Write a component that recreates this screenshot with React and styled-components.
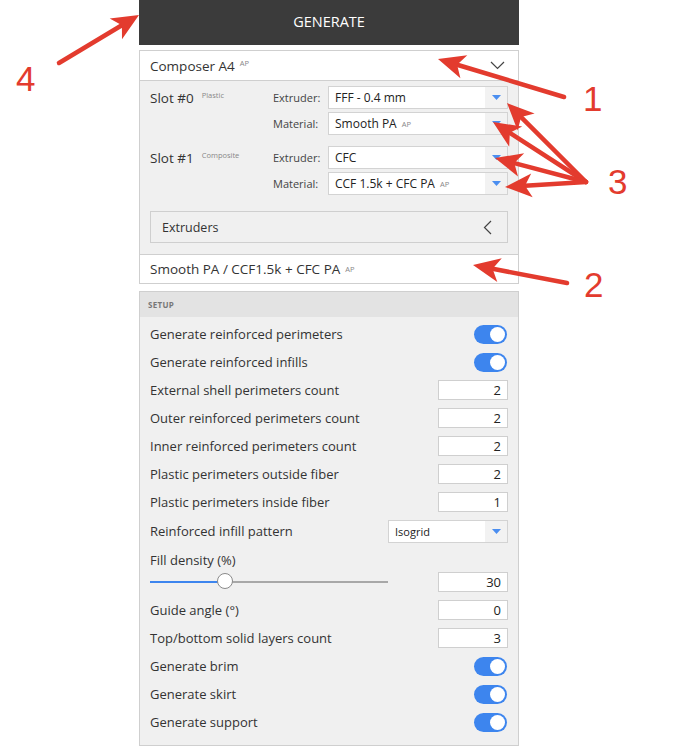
import React from "react";
import styled, { createGlobalStyle } from "styled-components";

const GlobalStyle = createGlobalStyle`
  html, body {
    margin: 0;
    padding: 0;
    background: #fff;
  }
  body {
    font-family: "Open Sans", "Noto Sans", sans-serif;
    color: #333;
  }
`;

const BLUE = "#3d85ee";
const RED = "#e33b2e";

// data
const slots = [
  {
    title: "Slot #0",
    kind: "Plastic",
    fields: [
      { label: "Extruder:", value: "FFF - 0.4 mm" },
      { label: "Material:", value: "Smooth PA", ap: true },
    ],
  },
  {
    title: "Slot #1",
    kind: "Composite",
    fields: [
      { label: "Extruder:", value: "CFC" },
      { label: "Material:", value: "CCF 1.5k + CFC PA", ap: true },
    ],
  },
];

const topRows = [
  { label: "Generate reinforced perimeters", type: "toggle" },
  { label: "Generate reinforced infills", type: "toggle" },
  { label: "External shell perimeters count", type: "number", value: 2 },
  { label: "Outer reinforced perimeters count", type: "number", value: 2 },
  { label: "Inner reinforced perimeters count", type: "number", value: 2 },
  { label: "Plastic perimeters outside fiber", type: "number", value: 2 },
  { label: "Plastic perimeters inside fiber", type: "number", value: 1 },
];

const bottomRows = [
  { label: "Guide angle (°)", type: "number", value: 0 },
  { label: "Top/bottom solid layers count", type: "number", value: 3 },
  { label: "Generate brim", type: "toggle" },
  { label: "Generate skirt", type: "toggle" },
  { label: "Generate support", type: "toggle" },
];

const arrows = [
  { from: [59, 63], to: [139, 15] },
  { from: [564, 97], to: [438, 59] },
  { from: [567, 283], to: [473, 265] },
  { from: [586, 182], to: [507, 103] },
  { from: [586, 182], to: [493, 122] },
  { from: [586, 182], to: [495, 158] },
  { from: [586, 182], to: [505, 187] },
];

const numbers = [
  { n: "4", x: 16, y: 91 },
  { n: "1", x: 583, y: 111 },
  { n: "2", x: 584, y: 297 },
  { n: "3", x: 608, y: 194 },
];

function App() {
  return (
    <Page>
      <GlobalStyle />
      <Sidebar>
        <GenerateButton>GENERATE</GenerateButton>

        <Card>
          <CardHeader>
            <span>
              Composer A4<Ap>AP</Ap>
            </span>
            <Chevron dir="down" />
          </CardHeader>

          <SlotsArea>
            {slots.map((slot) => (
              <SlotGroup key={slot.title}>
                <SlotTitle>
                  {slot.title}
                  <SlotKind>{slot.kind}</SlotKind>
                </SlotTitle>
                <Fields>
                  {slot.fields.map((f) => (
                    <FieldRow key={f.label}>
                      <FieldLabel>{f.label}</FieldLabel>
                      <Select height={23}>
                        <SelectText>
                          {f.value}
                          {f.ap && <Ap>AP</Ap>}
                        </SelectText>
                        <SelectArrow />
                      </Select>
                    </FieldRow>
                  ))}
                </Fields>
              </SlotGroup>
            ))}

            <Collapsible>
              <span>Extruders</span>
              <Chevron dir="left" />
            </Collapsible>
          </SlotsArea>

          <MaterialRow>
            Smooth PA / CCF1.5k + CFC PA<Ap>AP</Ap>
          </MaterialRow>
        </Card>

        <SetupPanel>
          <SectionHeader>SETUP</SectionHeader>
          <Rows>
            {topRows.map((r) => (
              <SettingRow key={r.label} {...r} />
            ))}

            <Row tall>
              <RowLabel>Reinforced infill pattern</RowLabel>
              <Select height={23} width={120}>
                <SelectText small>Isogrid</SelectText>
                <SelectArrow />
              </Select>
            </Row>

            <FillBlock>
              <RowLabel>Fill density (%)</RowLabel>
              <SliderRow>
                <Slider value={30} />
                <NumberBox>30</NumberBox>
              </SliderRow>
            </FillBlock>

            {bottomRows.map((r) => (
              <SettingRow key={r.label} {...r} />
            ))}
          </Rows>
        </SetupPanel>
      </Sidebar>

      <Annotations />
    </Page>
  );
}

function SettingRow({ label, type, value }) {
  return (
    <Row>
      <RowLabel>{label}</RowLabel>
      {type === "toggle" ? <Toggle /> : <NumberBox>{value}</NumberBox>}
    </Row>
  );
}

function Slider({ value }) {
  return (
    <Track>
      <TrackFill style={{ width: `${value}%` }} />
      <Knob style={{ left: `calc(${value}% - 4px)` }} />
    </Track>
  );
}

function Toggle() {
  return (
    <ToggleTrack>
      <ToggleKnob />
    </ToggleTrack>
  );
}

function SelectArrow() {
  return (
    <ArrowBox>
      <svg width="9" height="5" viewBox="0 0 9 5">
        <polygon points="0,0 9,0 4.5,5" fill="#4b8ef0" />
      </svg>
    </ArrowBox>
  );
}

function Chevron({ dir }) {
  if (dir === "down") {
    return (
      <svg width="15" height="9" viewBox="0 0 15 9">
        <polyline points="1,1 7.5,7.5 14,1" fill="none" stroke="#444" strokeWidth="1.2" />
      </svg>
    );
  }
  return (
    <svg width="9" height="15" viewBox="0 0 9 15">
      <polyline points="8,1 1.5,7.5 8,14" fill="none" stroke="#444" strokeWidth="1.2" />
    </svg>
  );
}

function arrowHead([x1, y1], [x2, y2]) {
  const dx = x2 - x1;
  const dy = y2 - y1;
  const len = Math.hypot(dx, dy);
  const ux = dx / len;
  const uy = dy / len;
  const px = -uy;
  const py = ux;
  const L = 27;
  const W = 12;
  const notch = 20;
  const bx = x2 - ux * L;
  const by = y2 - uy * L;
  const nx = x2 - ux * notch;
  const ny = y2 - uy * notch;
  const pts = [
    [x2, y2],
    [bx + px * W, by + py * W],
    [nx, ny],
    [bx - px * W, by - py * W],
  ];
  return {
    line: [x1, y1, nx, ny],
    head: pts.map((p) => p.map((v) => v.toFixed(1)).join(",")).join(" "),
  };
}

function Annotations() {
  return (
    <Overlay width="681" height="748" viewBox="0 0 681 748">
      {arrows.map((a, i) => {
        const { line, head } = arrowHead(a.from, a.to);
        return (
          <g key={i}>
            <line
              x1={line[0]}
              y1={line[1]}
              x2={line[2]}
              y2={line[3]}
              stroke={RED}
              strokeWidth="4.5"
              strokeLinecap="round"
            />
            <polygon points={head} fill={RED} />
          </g>
        );
      })}
      {numbers.map((n) => (
        <text
          key={n.n}
          x={n.x}
          y={n.y}
          fill={RED}
          fontSize="35"
          fontFamily="'Liberation Sans', Arial, sans-serif"
        >
          {n.n}
        </text>
      ))}
    </Overlay>
  );
}

const Page = styled.div`
  position: relative;
  width: 681px;
  height: 748px;
  overflow: hidden;
  background: #fff;
`;

const Sidebar = styled.div`
  margin-left: 139px;
  width: 380px;
  display: flex;
  flex-direction: column;
`;

const GenerateButton = styled.div`
  height: 45px;
  background: #3b3b3b;
  color: #fff;
  font-size: 14.5px;
  display: flex;
  align-items: center;
  justify-content: center;
  padding-bottom: 3px;
  box-sizing: border-box;
`;

const Card = styled.div`
  margin-top: 5px;
  border: 1px solid #cfcfcf;
  background: #fff;
`;

const CardHeader = styled.div`
  height: 29px;
  padding: 0 13px 0 10px;
  display: flex;
  align-items: center;
  justify-content: space-between;
  font-size: 13.5px;
  color: #333;
`;

const Ap = styled.sup`
  font-size: 7.5px;
  color: #888;
  margin-left: 5px;
  vertical-align: 5px;
  line-height: 0;
`;

const SlotsArea = styled.div`
  background: #f0f0f0;
  border-top: 1px solid #cfcfcf;
  padding: 5px 10px 11px 10px;
  display: flex;
  flex-direction: column;
  gap: 11px;
`;

const SlotGroup = styled.div`
  display: flex;
  align-items: flex-start;
`;

const SlotTitle = styled.div`
  width: 123px;
  height: 23px;
  display: flex;
  align-items: center;
  font-size: 13.5px;
  color: #333;
`;

const SlotKind = styled.span`
  font-size: 7.5px;
  color: #888;
  margin-left: 8px;
  align-self: flex-start;
  margin-top: 4px;
`;

const Fields = styled.div`
  flex: 1;
  display: flex;
  flex-direction: column;
  gap: 3px;
`;

const FieldRow = styled.div`
  display: flex;
  align-items: center;
`;

const FieldLabel = styled.div`
  width: 55px;
  font-size: 11px;
  color: #444;
`;

const Select = styled.div`
  flex: ${(p) => (p.width ? "none" : 1)};
  width: ${(p) => (p.width ? `${p.width}px` : "auto")};
  height: ${(p) => p.height}px;
  box-sizing: border-box;
  border: 1px solid #d3d3d3;
  background: #fff;
  display: flex;
  align-items: stretch;
`;

const SelectText = styled.div`
  flex: 1;
  display: flex;
  align-items: center;
  padding-left: 6px;
  font-size: ${(p) => (p.small ? "11px" : "12px")};
  color: #222;
  white-space: nowrap;
`;

const ArrowBox = styled.div`
  width: 22px;
  background: #f2f2f2;
  display: flex;
  align-items: center;
  justify-content: center;
`;

const Collapsible = styled.div`
  margin-top: 5px;
  height: 32px;
  box-sizing: border-box;
  border: 1px solid #cfcfcf;
  background: #f0f0f0;
  display: flex;
  align-items: center;
  justify-content: space-between;
  padding: 0 15px 0 11px;
  font-size: 12.5px;
  color: #333;
`;

const MaterialRow = styled.div`
  height: 28px;
  border-top: 1px solid #cfcfcf;
  padding: 0 10px;
  display: flex;
  align-items: center;
  font-size: 13.5px;
  color: #333;
`;

const SetupPanel = styled.div`
  margin-top: 7px;
  border: 1px solid #cfcfcf;
  background: #f0f0f0;
`;

const SectionHeader = styled.div`
  height: 25px;
  background: #e3e3e3;
  padding-left: 8px;
  display: flex;
  align-items: center;
  font-size: 8px;
  font-weight: 700;
  letter-spacing: 0.3px;
  color: #777;
`;

const Rows = styled.div`
  padding: 3px 10px 9px 10px;
  display: flex;
  flex-direction: column;
`;

const Row = styled.div`
  height: ${(p) => (p.tall ? 30 : 28)}px;
  display: flex;
  align-items: center;
  justify-content: space-between;
`;

const RowLabel = styled.div`
  font-size: 13px;
  color: #333;
  white-space: nowrap;
`;

const NumberBox = styled.div`
  width: 70px;
  height: 20px;
  box-sizing: border-box;
  border: 1px solid #cfcfcf;
  background: #fff;
  display: flex;
  align-items: center;
  justify-content: flex-end;
  padding-right: 6px;
  font-size: 13px;
  color: #222;
`;

const ToggleTrack = styled.div`
  width: 33px;
  height: 19px;
  margin-right: 1px;
  border-radius: 10px;
  background: ${BLUE};
  display: flex;
  align-items: center;
  justify-content: flex-end;
  padding-right: 2px;
  box-sizing: border-box;
`;

const ToggleKnob = styled.div`
  width: 15px;
  height: 15px;
  border-radius: 50%;
  background: #fff;
`;

const FillBlock = styled.div`
  padding: 3px 0 3px 0;
  display: flex;
  flex-direction: column;
  ${RowLabel} {
    height: 22px;
    display: flex;
    align-items: center;
  }
`;

const SliderRow = styled.div`
  height: 22px;
  display: flex;
  align-items: center;
  justify-content: space-between;
`;

const Track = styled.div`
  position: relative;
  width: 238px;
  height: 2px;
  background: #a8a8a8;
`;

const TrackFill = styled.div`
  height: 100%;
  background: ${BLUE};
`;

const Knob = styled.div`
  position: absolute;
  top: -8px;
  width: 16px;
  height: 16px;
  box-sizing: border-box;
  border-radius: 50%;
  border: 1px solid #8a8a8a;
  background: #fff;
`;

const Overlay = styled.svg`
  position: absolute;
  left: 0;
  top: 0;
  pointer-events: none;
`;

export default App;
